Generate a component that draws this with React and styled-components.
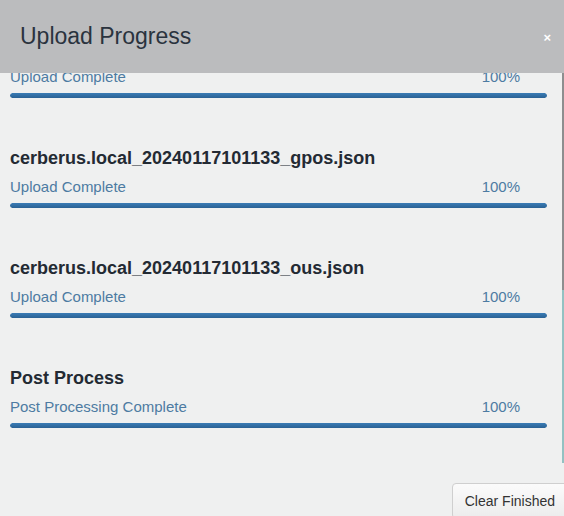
import React, { useLayoutEffect, useRef } from "react";
import styled, { createGlobalStyle } from "styled-components";

const GlobalStyle = createGlobalStyle`
  html, body {
    margin: 0;
    padding: 0;
    background: #eff0f0;
  }
  body {
    font-family: "Liberation Sans", Arial, sans-serif;
    overflow: hidden;
  }
`;

const Modal = styled.div`
  width: 564px;
  height: 516px;
  display: flex;
  flex-direction: column;
  background: #eff0f0;
  overflow: hidden;
`;

const Header = styled.header`
  height: 73px;
  flex-shrink: 0;
  display: flex;
  align-items: center;
  padding: 0 13px 0 20px;
  background: #bbbcbe;
`;

const Title = styled.h1`
  margin: 0;
  font-size: 23px;
  font-weight: 400;
  color: #2a333e;
`;

const CloseButton = styled.button`
  margin-left: auto;
  margin-top: 2px;
  border: none;
  background: none;
  padding: 0;
  color: #ffffff;
  font-family: "Liberation Sans", Arial, sans-serif;
  font-size: 13px;
  font-weight: 700;
  cursor: pointer;
`;

const Body = styled.div`
  height: 390px;
  flex-shrink: 0;
  display: flex;
`;

const List = styled.div`
  flex: 1;
  overflow-y: scroll;
  scrollbar-width: none;
  &::-webkit-scrollbar {
    display: none;
  }
`;

const ListInner = styled.div`
  padding: 0 15px 0 10px;
`;

const Row = styled.section`
  height: 110px;
  box-sizing: border-box;
`;

const FileName = styled.h3`
  margin: 0 0 8px;
  height: 22px;
  line-height: 22px;
  font-size: 18px;
  font-weight: 700;
  color: #232a33;
`;

const StatusLine = styled.div`
  display: flex;
  justify-content: space-between;
  height: 20px;
  line-height: 20px;
  padding-right: 27px;
  font-size: 15px;
  color: #4d7ba2;
`;

const Track = styled.div`
  margin-top: 6px;
  height: 5px;
  border-radius: 3px;
  background: #dfe3e6;
  overflow: hidden;
`;

const Fill = styled.div`
  height: 100%;
  border-radius: 3px;
  background: linear-gradient(#3a7cb5, #2a6194);
`;

const Rail = styled.div`
  width: 2px;
  display: flex;
  flex-direction: column;
`;

const RailThumb = styled.div`
  height: 217px;
  background: #8d8e8f;
`;

const RailTrack = styled.div`
  flex: 1;
  background: #93c1c2;
`;

const Footer = styled.footer`
  flex: 1;
  display: flex;
  justify-content: flex-end;
  align-items: flex-start;
  padding-top: 20px;
`;

const ClearButton = styled.button`
  flex-shrink: 0;
  height: 36px;
  margin-right: -4px;
  padding: 0 12px;
  border: 1px solid #cfcfcf;
  border-radius: 4px;
  background: linear-gradient(#fbfbfb, #ececec);
  color: #333;
  font-family: "Liberation Sans", Arial, sans-serif;
  font-size: 14px;
  white-space: nowrap;
  line-height: 32px;
  cursor: pointer;
`;

const uploads = [
  { name: "cerberus.local_20240117101133_pos.json", status: "Upload Complete", progress: 100 },
  { name: "cerberus.local_20240117101133_gpos.json", status: "Upload Complete", progress: 100 },
  { name: "cerberus.local_20240117101133_ous.json", status: "Upload Complete", progress: 100 },
  { name: "Post Process", status: "Post Processing Complete", progress: 100 },
];

export default function App() {
  const listRef = useRef(null);

  useLayoutEffect(() => {
    // the list is shown scrolled a little past its first entry
    if (listRef.current) listRef.current.scrollTop = 36;
  }, []);

  return (
    <>
      <GlobalStyle />
      <Modal>
        <Header>
          <Title>Upload Progress</Title>
          <CloseButton type="button">×</CloseButton>
        </Header>
        <Body>
          <List ref={listRef}>
            <ListInner>
              {uploads.map((u) => (
                <Row key={u.name}>
                  <FileName>{u.name}</FileName>
                  <StatusLine>
                    <span>{u.status}</span>
                    <span>{u.progress}%</span>
                  </StatusLine>
                  <Track>
                    <Fill style={{ width: `${u.progress}%` }} />
                  </Track>
                </Row>
              ))}
            </ListInner>
          </List>
          <Rail>
            <RailThumb />
            <RailTrack />
          </Rail>
        </Body>
        <Footer>
          <ClearButton type="button">Clear Finished</ClearButton>
        </Footer>
      </Modal>
    </>
  );
}
